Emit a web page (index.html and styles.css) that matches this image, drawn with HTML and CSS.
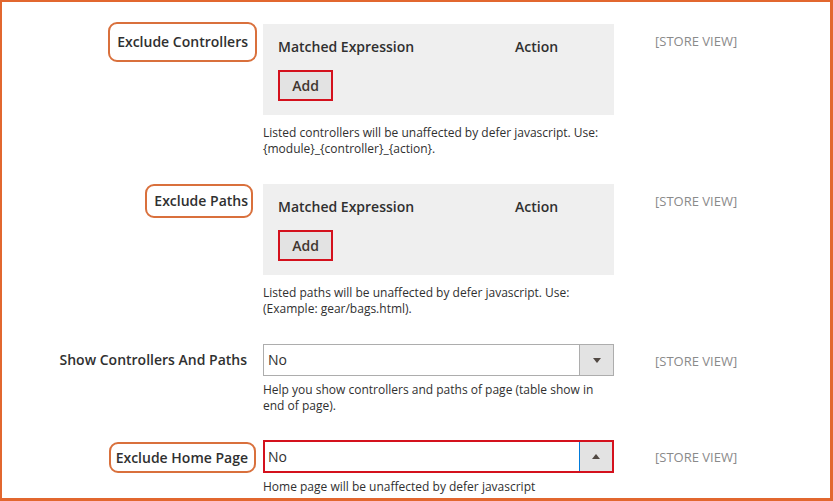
FILE: index.html
```html
<!DOCTYPE html>
<html>
<head>
<meta charset="utf-8">
<link rel="stylesheet" href="styles.css">
</head>
<body>
<div class="frame">
  <div class="row row-table">
    <div class="label"><span class="mark mark-1">Exclude Controllers</span></div>
    <div class="control">
      <div class="dyn-table">
        <div class="dyn-head"><span>Matched Expression</span><span>Action</span></div>
        <button class="add-btn">Add</button>
      </div>
      <div class="note note-table">Listed controllers will be unaffected by defer javascript. Use:<br>{module}_{controller}_{action}.</div>
    </div>
    <div class="scope">[STORE VIEW]</div>
  </div>

  <div class="row row-table">
    <div class="label"><span class="mark mark-2">Exclude Paths</span></div>
    <div class="control">
      <div class="dyn-table">
        <div class="dyn-head"><span>Matched Expression</span><span>Action</span></div>
        <button class="add-btn">Add</button>
      </div>
      <div class="note note-table">Listed paths will be unaffected by defer javascript. Use:<br>(Example: gear/bags.html).</div>
    </div>
    <div class="scope">[STORE VIEW]</div>
  </div>

  <div class="row row-select">
    <div class="label"><span class="plain">Show Controllers And Paths</span></div>
    <div class="control">
      <div class="select">
        <span class="select-value">No</span>
        <span class="select-arrow"><span class="tri tri-down"></span></span>
      </div>
      <div class="note note-select">Help you show controllers and paths of page (table show in<br>end of page).</div>
    </div>
    <div class="scope">[STORE VIEW]</div>
  </div>

  <div class="row row-select">
    <div class="label"><span class="mark mark-4">Exclude Home Page</span></div>
    <div class="control">
      <div class="select select-open">
        <span class="select-value">No</span>
        <span class="select-arrow"><span class="tri tri-up"></span></span>
      </div>
      <div class="note note-select">Home page will be unaffected by defer javascript</div>
    </div>
    <div class="scope">[STORE VIEW]</div>
  </div>
</div>
</body>
</html>
```

FILE: styles.css
```css
html, body {
  margin: 0;
  padding: 0;
  background: #ffffff;
}

.frame {
  box-sizing: border-box;
  width: 833px;
  height: 501px;
  overflow: hidden;
  border: 2px solid #e2672f;
  border-right-width: 3px;
  border-bottom-width: 3px;
  padding-top: 22px;
  font-family: "Open Sans", "Noto Sans", sans-serif;
  color: #303030;
}

.row {
  display: grid;
  grid-template-columns: 246px 351px 1fr;
  column-gap: 15px;
  align-items: start;
}

.row-table { margin-bottom: 27px; }
.row-select { margin-bottom: 26px; }

.row > .scope { margin-left: 26px; }

.label {
  display: flex;
  justify-content: flex-end;
  align-items: flex-start;
  font-size: 14px;
  font-weight: 600;
  color: #303030;
}

.plain {
  line-height: 32px;
  margin-right: 1px;
}

.mark {
  display: inline-block;
  border: 2px solid #d9703c;
  border-radius: 9px;
  background: #fff;
}

.mark-1 {
  line-height: 30px;
  padding: 3px 7px 3px 7px;
  margin-top: -2px;
  margin-right: -9px;
}

.mark-2 {
  line-height: 30px;
  padding: 0 3px 0 7px;
  margin-top: 0;
  margin-right: -5px;
}

.mark-4 {
  line-height: 27px;
  padding: 0 6px 0 5px;
  margin-top: 2px;
  margin-right: -8px;
}

.control {
  display: flex;
  flex-direction: column;
}

.dyn-table {
  box-sizing: border-box;
  height: 91px;
  background: #efefef;
  padding: 14px 15px;
}

.dyn-head {
  display: grid;
  grid-template-columns: 237px 1fr;
  font-size: 14px;
  font-weight: 600;
  line-height: 18px;
  color: #303030;
}

.add-btn {
  display: block;
  box-sizing: border-box;
  margin-top: 14px;
  width: 55px;
  height: 31px;
  padding: 0;
  border: 2px solid #d4111d;
  background: #e3e3e3;
  font-family: "Open Sans", "Noto Sans", sans-serif;
  font-size: 14px;
  font-weight: 600;
  color: #41362f;
}

.note {
  font-size: 12px;
  line-height: 16px;
  color: #303030;
}

.note-table { margin-top: 10px; }
.note-select { margin-top: 6px; }

.select {
  box-sizing: border-box;
  height: 32px;
  display: flex;
  border: 1px solid #adadad;
  background: #fff;
}

.select-value {
  flex: 1;
  padding-left: 4px;
  font-size: 14px;
  line-height: 30px;
  color: #303030;
}

.select-arrow {
  width: 33px;
  display: flex;
  align-items: center;
  justify-content: center;
  background: #e3e3e3;
  border-left: 1px solid #adadad;
}

.select-open {
  border: 2px solid #d4111d;
  height: 33px;
}

.select-open .select-value {
  line-height: 29px;
  padding-left: 3px;
}

.select-open .select-arrow {
  width: 32px;
  border-left-color: #007bdb;
}

.tri {
  width: 0;
  height: 0;
  border-left: 4px solid transparent;
  border-right: 4px solid transparent;
}

.tri-down { border-top: 5px solid #514943; }
.tri-up { border-bottom: 5px solid #514943; }

.scope {
  font-size: 13px;
  line-height: 34px;
  color: #8a8a8a;
}
```
